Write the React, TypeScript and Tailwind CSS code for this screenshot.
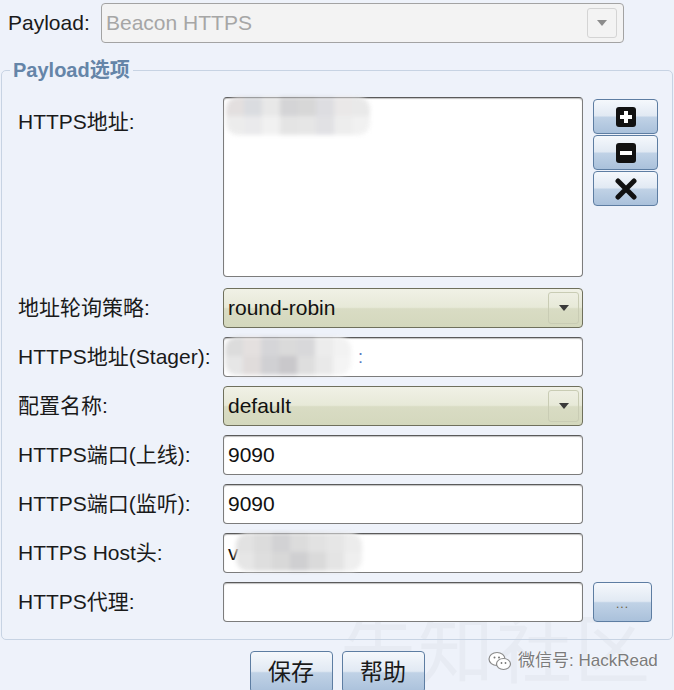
import React from "react";

const FONT = { fontFamily: '"Liberation Sans", Arial, "Noto Sans CJK SC", sans-serif' };

function Arrow({ color = "#444" }: { color?: string }) {
  return (
    <svg width="10" height="6" viewBox="0 0 10 6">
      <path d="M0 0 H10 L5 6 Z" fill={color} />
    </svg>
  );
}

function Blur({ cells }: { cells: string[][] }) {
  return (
    <div className="flex flex-col blur-[2px] rounded-[12px] overflow-hidden">
      {cells.map((row, i) => (
        <div key={i} className="flex">
          {row.map((c, j) => (
            <div key={j} className="w-[18px] h-[19px]" style={{ background: c }} />
          ))}
        </div>
      ))}
    </div>
  );
}

function TextInput({ value, children }: { value?: string; children?: React.ReactNode }) {
  return (
    <div className="relative h-[40px] w-[360px] rounded-[4px] border border-[#7c7c7c] border-t-[#5a5a5a] bg-white shadow-[inset_0_1px_1px_rgba(0,0,0,0.25)] flex items-center pl-[4px] text-[21px] text-[#111]">
      {value}
      {children}
    </div>
  );
}

function GreenCombo({ value }: { value: string }) {
  return (
    <div className="h-[40px] w-[360px] rounded-[4px] border border-[#6f705c] bg-[linear-gradient(to_bottom,#f0f1e6_0%,#e7e9d8_48%,#d9dcc4_52%,#d4d8bd_100%)] flex items-center pl-[4px] pr-[3px] text-[21px] text-[#111]">
      <span className="flex-1">{value}</span>
      <div className="w-[31px] h-[32px] rounded-[3px] border border-[#c9ccb4] flex items-center justify-center">
        <Arrow color="#3a3a3a" />
      </div>
    </div>
  );
}

const btnBg =
  "bg-[linear-gradient(to_bottom,#f5f8fc_0%,#e1e9f3_48%,#c0d2e6_52%,#aac1db_100%)] border border-[#5d7da2] rounded-[4px]";

function Row({ label, children }: { label: string; children: React.ReactNode }) {
  return (
    <div className="flex items-center h-[40px]">
      <div className="w-[205px] text-[21px] text-[#1a1a1a] whitespace-nowrap">{label}</div>
      {children}
    </div>
  );
}

export default function App() {
  return (
    <div className="relative w-[674px] h-[690px] overflow-hidden bg-[#eef2fa]" style={FONT}>
      {/* watermark */}
      <div className="absolute left-[340px] top-[606px] text-[76px] leading-none text-[#e7ebf3] tracking-[2px] select-none" style={{ fontFamily: '"Noto Sans CJK SC", sans-serif' }}>
        先知社区
      </div>

      {/* top row */}
      <div className="relative flex items-center pt-[3px]">
        <div className="w-[101px] pl-[8px] text-[21px] text-[#1a1a1a]">Payload:</div>
        <div className="h-[40px] w-[523px] rounded-[4px] border border-[#a3a3a3] bg-[#f3f3f3] flex items-center pl-[4px] pr-[6px] text-[21px] text-[#a6a6a6]">
          <span className="flex-1">Beacon HTTPS</span>
          <div className="w-[30px] h-[30px] rounded-[3px] border border-[#d4d4d4] flex items-center justify-center">
            <Arrow color="#8c8c8c" />
          </div>
        </div>
      </div>

      {/* fieldset */}
      <fieldset className="relative mt-[12px] mx-[1px] w-[671px] border border-[#c7d3e3] rounded-[5px] pl-[16px] pr-[14px] pb-[17px] pt-[12px]">
        <legend className="ml-[-8px] px-[3px] text-[20px] font-bold text-[#6585a8]">Payload选项</legend>

        <div className="flex">
          <div className="w-[205px] text-[21px] text-[#1a1a1a] pt-[9px]">HTTPS地址:</div>
          <div className="relative h-[180px] w-[360px] rounded-[4px] border border-[#7c7c7c] border-t-[#5a5a5a] bg-white shadow-[inset_0_1px_1px_rgba(0,0,0,0.25)]">
            <div className="absolute left-[2px] top-[-1px] opacity-90">
              <Blur
                cells={[
                  ["#e0dcdc", "#d7d9dd", "#e6e6e6", "#d0d0d2", "#d3d3d3", "#dadade", "#e8e6e6", "#e7e7e7"],
                  ["#ebebeb", "#e8e8ea", "#f0f0f0", "#e2e2e2", "#e4e4e4", "#dedee2", "#ececec", "#f0f0f0"],
                ]}
              />
            </div>
          </div>
          <div className="ml-[10px] flex flex-col gap-[1px] pt-[2px]">
            <div className={`w-[65px] h-[35px] ${btnBg} flex items-center justify-center`}>
              <svg width="20" height="20" viewBox="0 0 20 20">
                <rect x="0" y="0" width="20" height="20" rx="3" fill="#111" />
                <rect x="8" y="4" width="4" height="12" fill="#fff" />
                <rect x="4" y="8" width="12" height="4" fill="#fff" />
              </svg>
            </div>
            <div className={`w-[65px] h-[35px] ${btnBg} flex items-center justify-center`}>
              <svg width="20" height="20" viewBox="0 0 20 20">
                <rect x="0" y="0" width="20" height="20" rx="3" fill="#111" />
                <rect x="4" y="8" width="12" height="4" fill="#fff" />
              </svg>
            </div>
            <div className={`w-[65px] h-[35px] ${btnBg} flex items-center justify-center`}>
              <svg width="22" height="22" viewBox="0 0 22 22">
                <path d="M3 3 L19 19 M19 3 L3 19" stroke="#111" strokeWidth="5" strokeLinecap="round" />
              </svg>
            </div>
          </div>
        </div>

        <div className="flex flex-col gap-[9px] mt-[11px]">
          <Row label="地址轮询策略:">
            <GreenCombo value="round-robin" />
          </Row>
          <Row label="HTTPS地址(Stager):">
            <TextInput>
              <div className="absolute left-[1px] top-[-1px]">
                <Blur
                  cells={[
                    ["#dcdcdc", "#e4e0df", "#d5d5d8", "#dadada", "#d8d8da", "#ececec", "#f2f2f2"],
                    ["#e6e6e6", "#e0dcdb", "#d0d0d3", "#c9c8cb", "#dedede", "#e9e9e9", "#f4f4f4"],
                  ]}
                />
              </div>
              <span className="absolute left-[134px] text-[#5c7bc2] text-[18px]">:</span>
            </TextInput>
          </Row>
          <Row label="配置名称:">
            <GreenCombo value="default" />
          </Row>
          <Row label="HTTPS端口(上线):">
            <TextInput value="9090" />
          </Row>
          <Row label="HTTPS端口(监听):">
            <TextInput value="9090" />
          </Row>
          <Row label="HTTPS Host头:">
            <TextInput value="v">
              <div className="absolute left-[12px] top-[-1px]">
                <Blur
                  cells={[
                    ["#e2e2e2", "#dcdcdc", "#d2d2d4", "#dcdcdc", "#e2e2e2", "#e6e6e6", "#ececec"],
                    ["#e6e6e6", "#dedede", "#d8d8d8", "#cfcfd1", "#dadada", "#e4e4e4", "#efefef"],
                  ]}
                />
              </div>
            </TextInput>
          </Row>
          <Row label="HTTPS代理:">
            <TextInput />
            <div className={`ml-[10px] w-[59px] h-[40px] ${btnBg} flex items-end justify-center pb-[11px]`}>
              <span className="text-[12px] leading-none text-[#6a5a3a] tracking-[1px]">...</span>
            </div>
          </Row>
        </div>
      </fieldset>

      {/* bottom buttons */}
      <div className="relative flex justify-center gap-[9px] mt-[11px]">
        <div className={`w-[83px] h-[42px] ${btnBg} flex items-center justify-center text-[23px] text-[#1a1a1a]`}>保存</div>
        <div className={`w-[83px] h-[42px] ${btnBg} flex items-center justify-center text-[23px] text-[#1a1a1a]`}>帮助</div>
      </div>

      {/* wechat watermark */}
      <div className="absolute left-[488px] top-[648px] flex items-center gap-[6px] text-[17px] text-[#7b7b7b]" style={{ textShadow: "0 0 2px #fff" }}>
        <svg width="24" height="20" viewBox="0 0 24 20">
          <ellipse cx="9" cy="8" rx="8" ry="6.5" fill="#fff" stroke="#8a8a8a" strokeWidth="1.2" />
          <ellipse cx="15.5" cy="13" rx="7" ry="5.5" fill="#fff" stroke="#8a8a8a" strokeWidth="1.2" />
          <circle cx="6.5" cy="6.5" r="1" fill="#777" />
          <circle cx="11" cy="6.5" r="1" fill="#777" />
          <circle cx="13.5" cy="12" r="0.9" fill="#777" />
          <circle cx="17.5" cy="12" r="0.9" fill="#777" />
        </svg>
        <span>微信号: HackRead</span>
      </div>
    </div>
  );
}
